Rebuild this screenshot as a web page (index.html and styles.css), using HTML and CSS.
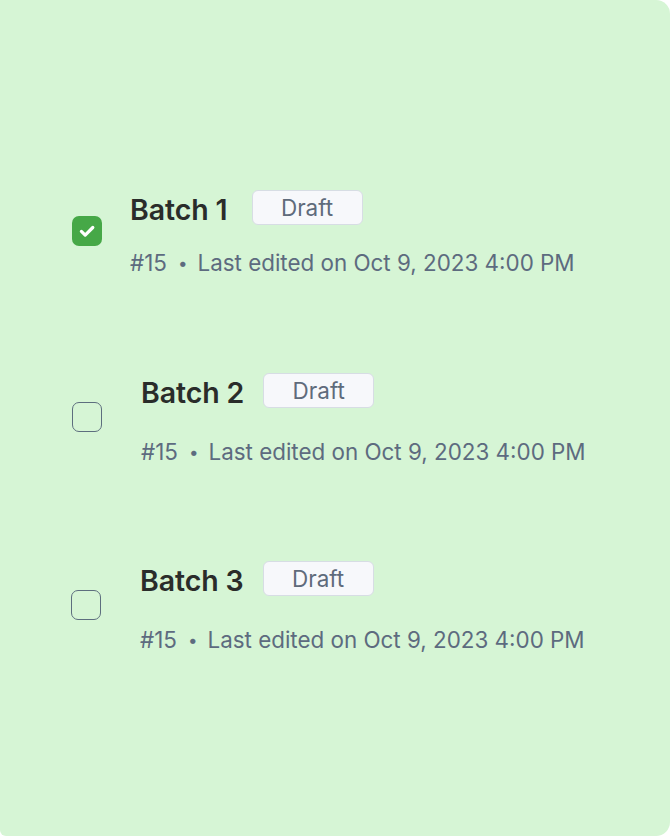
FILE: index.html
```html
<!DOCTYPE html>
<html lang="en">
<head>
<meta charset="utf-8">
<title>Batches</title>
<link rel="stylesheet" href="styles.css">
</head>
<body>
<div class="card">
  <ul class="list">
    <li class="item item-1">
      <span class="check checked">
        <svg viewBox="0 0 30 30" width="30" height="30"><path d="M9.4 15.4l3.8 3.7L20.8 11.5" fill="none" stroke="#fff" stroke-width="3.2" stroke-linecap="round" stroke-linejoin="round"/></svg>
      </span>
      <div class="info info-tight">
        <div class="head"><span class="title">Batch 1</span><span class="badge">Draft</span></div>
        <div class="meta">#15<span class="dot">•</span>Last edited on Oct 9, 2023 4:00 PM</div>
      </div>
    </li>
    <li class="item item-2">
      <span class="check"></span>
      <div class="info">
        <div class="head head-narrow"><span class="title">Batch 2</span><span class="badge">Draft</span></div>
        <div class="meta">#15<span class="dot">•</span>Last edited on Oct 9, 2023 4:00 PM</div>
      </div>
    </li>
    <li class="item item-3">
      <span class="check"></span>
      <div class="info">
        <div class="head head-narrow"><span class="title">Batch 3</span><span class="badge">Draft</span></div>
        <div class="meta">#15<span class="dot">•</span>Last edited on Oct 9, 2023 4:00 PM</div>
      </div>
    </li>
  </ul>
</div>
</body>
</html>
```
FILE: styles.css
```css
html, body {
  margin: 0;
  padding: 0;
  background: #ffffff;
}
body {
  font-family: Inter, "Noto Sans", sans-serif;
}
.card {
  width: 670px;
  height: 836px;
  background: #d6f5d5;
  border-radius: 0 14px 14px 6px;
  box-sizing: border-box;
  padding-top: 190px;
}
.list {
  list-style: none;
  margin: 0;
  padding: 0 0 0 72px;
  display: flex;
  flex-direction: column;
}
.item {
  display: flex;
  align-items: center;
  gap: 28px;
}
.item-2 {
  margin-top: 96px;
  gap: 39px;
}
.item-3 {
  margin-top: 95px;
  margin-left: -1px;
  gap: 39px;
}
.check {
  width: 30px;
  height: 30px;
  box-sizing: border-box;
  border: 1.6px solid #5d6e7e;
  border-radius: 7px;
  margin-bottom: 6px;
  flex: none;
  display: flex;
}
.check.checked {
  border: none;
  background: #46a847;
}
.info {
  display: flex;
  flex-direction: column;
  gap: 30px;
}
.info-tight {
  gap: 24px;
}
.head {
  display: flex;
  align-items: center;
  gap: 24px;
  height: 35px;
}
.head-narrow {
  gap: 19px;
}
.title {
  font-size: 28.5px;
  font-weight: 600;
  color: #2a2c2a;
  letter-spacing: -0.1px;
  padding-top: 4px;
}
.badge {
  box-sizing: border-box;
  width: 111px;
  height: 35px;
  display: flex;
  align-items: center;
  justify-content: center;
  background: #f7f8fb;
  border: 1.5px solid #d7dde4;
  border-radius: 6px;
  font-size: 22.5px;
  color: #5f6b7b;
}
.meta {
  font-size: 22.4px;
  line-height: 28px;
  color: #5d6b7f;
}
.dot {
  display: inline-block;
  margin: 0 10px 0 11px;
  font-size: 17px;
  vertical-align: 2px;
}
```
